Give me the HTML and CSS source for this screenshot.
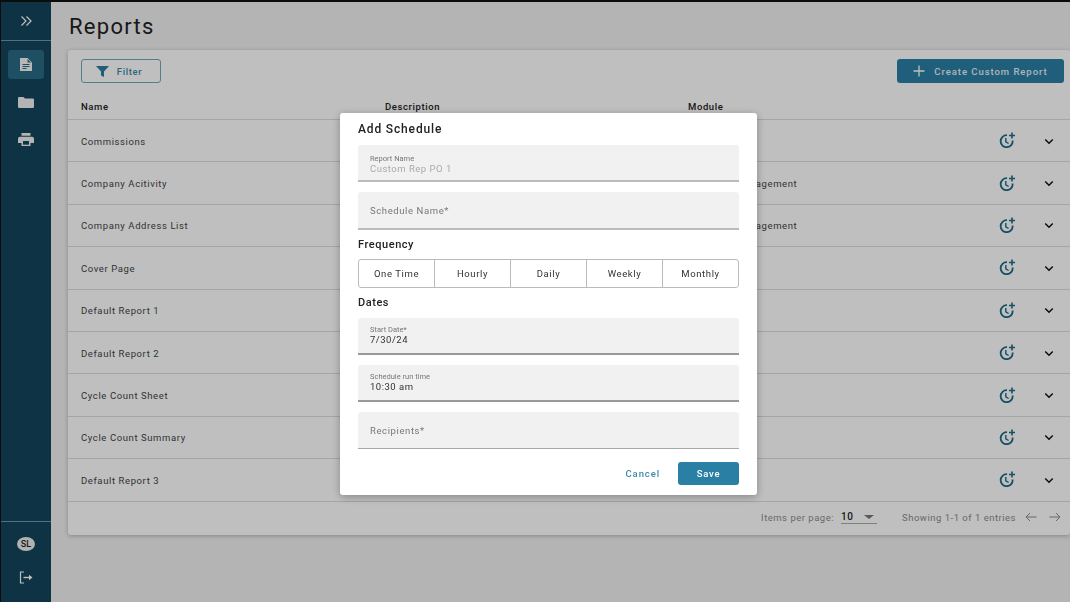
FILE: index.html
```html
<!DOCTYPE html>
<html lang="en">
<head>
  <meta charset="UTF-8">
  <title>Reports</title>
  <link rel="stylesheet" href="styles.css">
</head>
<body>
  <svg class="icon-defs" width="0" height="0">
    <symbol id="clock-plus" viewBox="0 0 20 16">
      <path d="M10 3.200A6 6 0 1 0 15.600 8.500" fill="none" stroke="currentColor" stroke-width="1.800"/>
      <path d="M8.800 6v3.800l2.800 1.700" fill="none" stroke="currentColor" stroke-width="1.400"/>
      <path d="M15 .5v6M12 3.500h6" fill="none" stroke="currentColor" stroke-width="1.600"/>
    </symbol>
    <symbol id="chevron" viewBox="0 0 12 8">
      <path d="M1.500 1.500 6 6l4.500-4.500" fill="none" stroke="currentColor" stroke-width="1.800"/>
    </symbol>
  </svg>

  <div class="app">
    <nav class="sidebar">
      <div class="sidebar-top">
        <svg width="12" height="12" viewBox="0 0 12 12"><path d="M1.500 1.500 6 6l-4.500 4.500M6.500 1.500 11 6l-4.500 4.500" fill="none" stroke="#fff" stroke-width="1.200"/></svg>
      </div>
      <div class="nav-items">
        <a class="nav-item active">
          <svg width="12" height="13" viewBox="0 0 12 13"><path fill="#f4f4f4" d="M0 0h7.500L12 4.500V13H0z"/><path fill="none" stroke="#2a6a84" stroke-width="1.100" d="M2.500 6.500h7M2.500 8.500h7M2.500 10.500h4"/><path fill="#2a6a84" d="M7.500 1v3.500H11z"/></svg>
        </a>
        <a class="nav-item">
          <svg width="16" height="11" viewBox="0 0 16 11"><path fill="#f0f0f0" d="M0 1.200A1.200 1.200 0 0 1 1.200 0h4.300l1.500 1.500h7.800A1.200 1.200 0 0 1 16 2.700v7.100a1.200 1.200 0 0 1-1.200 1.200H1.200A1.200 1.200 0 0 1 0 9.800z"/></svg>
        </a>
        <a class="nav-item">
          <svg width="16" height="13" viewBox="0 0 16 13"><path fill="#f0f0f0" d="M3.500 0h9v2.800h-9zM2 3.800h12a2 2 0 0 1 2 2V10h-3.500v3h-9v-3H0V5.800a2 2 0 0 1 2-2z"/><path fill="#13455d" d="M5 8h6v3.700H5z"/></svg>
        </a>
      </div>
      <div class="sidebar-bottom">
        <span class="avatar">SL</span>
        <svg width="14" height="13" viewBox="0 0 14 13"><path d="M5 1H1.500v11H5" fill="none" stroke="#fff" stroke-width="1.200"/><path d="M4.500 6.500H11" stroke="#fff" stroke-width="1.400"/><path fill="#fff" d="M10 3.800 13.500 6.500 10 9.200z"/></svg>
      </div>
    </nav>

    <main class="content">
      <h1>Reports</h1>
      <section class="card">
        <div class="toolbar">
          <button class="btn-filter">
            <svg width="13" height="11" viewBox="0 0 13 11"><path fill="#2a7fa5" d="M0 0h13L8 5.500V11L5 9.500v-4z"/></svg>
            Filter
          </button>
          <button class="btn-create">
            <svg width="12" height="12" viewBox="0 0 12 12"><path d="M6 .5v11M.5 6h11" stroke="#fff" stroke-width="1.300"/></svg>
            Create Custom Report
          </button>
        </div>
        <div class="row head">
          <span>Name</span><span>Description</span><span>Module</span>
        </div>
        <div class="row">
          <span>Commissions</span><span></span><span></span>
          <svg class="clock"><use href="#clock-plus"/></svg><svg class="chev"><use href="#chevron"/></svg>
        </div>
        <div class="row">
          <span>Company Acitivity</span><span></span><span>Company Management</span>
          <svg class="clock"><use href="#clock-plus"/></svg><svg class="chev"><use href="#chevron"/></svg>
        </div>
        <div class="row">
          <span>Company Address List</span><span></span><span>Company Management</span>
          <svg class="clock"><use href="#clock-plus"/></svg><svg class="chev"><use href="#chevron"/></svg>
        </div>
        <div class="row">
          <span>Cover Page</span><span></span><span></span>
          <svg class="clock"><use href="#clock-plus"/></svg><svg class="chev"><use href="#chevron"/></svg>
        </div>
        <div class="row">
          <span>Default Report 1</span><span></span><span></span>
          <svg class="clock"><use href="#clock-plus"/></svg><svg class="chev"><use href="#chevron"/></svg>
        </div>
        <div class="row">
          <span>Default Report 2</span><span></span><span>Vendor Order</span>
          <svg class="clock"><use href="#clock-plus"/></svg><svg class="chev"><use href="#chevron"/></svg>
        </div>
        <div class="row">
          <span>Cycle Count Sheet</span><span></span><span></span>
          <svg class="clock"><use href="#clock-plus"/></svg><svg class="chev"><use href="#chevron"/></svg>
        </div>
        <div class="row">
          <span>Cycle Count Summary</span><span></span><span></span>
          <svg class="clock"><use href="#clock-plus"/></svg><svg class="chev"><use href="#chevron"/></svg>
        </div>
        <div class="row">
          <span>Default Report 3</span><span></span><span></span>
          <svg class="clock"><use href="#clock-plus"/></svg><svg class="chev"><use href="#chevron"/></svg>
        </div>
        <div class="pager">
          <span>Items per page:</span>
          <span class="page-size"><b>10</b><i class="caret"></i></span>
          <span class="showing">Showing 1-1 of 1 entries</span>
          <svg width="12" height="10" viewBox="0 0 12 10"><path d="M11.500 5H1M5 1 1 5l4 4" fill="none" stroke="#8a8a8a" stroke-width="1"/></svg>
          <svg width="12" height="10" viewBox="0 0 12 10"><path d="M.5 5H11M7 1l4 4-4 4" fill="none" stroke="#8a8a8a" stroke-width="1"/></svg>
        </div>
      </section>
    </main>
  </div>

  <!-- Add Schedule modal -->
  <div class="modal-container">
    <div class="modal-content">
      <h2>Add Schedule</h2>
      <div class="field filled disabled">
        <label>Report Name</label>
        <div class="value">Custom Rep PO 1</div>
      </div>
      <div class="field schedule-name">
        <div class="placeholder">Schedule Name*</div>
      </div>
      <h3 class="freq-title">Frequency</h3>
      <div class="toggle-group">
        <button>One Time</button>
        <button>Hourly</button>
        <button>Daily</button>
        <button>Weekly</button>
        <button>Monthly</button>
      </div>
      <h3 class="dates-title">Dates</h3>
      <div class="field filled">
        <label>Start Date*</label>
        <div class="value">7/30/24</div>
      </div>
      <div class="field filled">
        <label>Schedule run time</label>
        <div class="value">10:30 am</div>
      </div>
      <div class="field thin">
        <div class="placeholder">Recipients*</div>
      </div>
      <div class="modal-buttons">
        <button class="btn-cancel">Cancel</button>
        <button class="btn-save">Save</button>
      </div>
    </div>
  </div>
</body>
</html>
```

FILE: styles.css
```css
* {
  box-sizing: border-box;
}

body {
  margin: 0;
  height: 602px;
  overflow: hidden;
  font-family: Roboto, "Liberation Sans", sans-serif;
  background-color: #f0f0f0;
  color: #333;
  border-top: 2px solid #111;
  border-left: 1px solid #111;
}

button {
  font-family: inherit;
  cursor: pointer;
}

.icon-defs {
  position: absolute;
}

.app {
  display: flex;
  height: 600px;
}

/* Sidebar */
.sidebar {
  width: 50px;
  flex-shrink: 0;
  display: flex;
  flex-direction: column;
  background-color: #13455d;
}

.sidebar-top {
  height: 39px;
  display: flex;
  align-items: center;
  justify-content: center;
  border-bottom: 1px solid #6f97a6;
}

.nav-items {
  flex: 1;
  display: flex;
  flex-direction: column;
  align-items: center;
  gap: 10px;
  padding-top: 9px;
}

.nav-item {
  width: 36px;
  height: 27px;
  display: flex;
  align-items: center;
  justify-content: center;
  border-radius: 3px;
}

.nav-item.active {
  height: 29px;
  background-color: #2a6a84;
}

.sidebar-bottom {
  height: 81px;
  display: flex;
  flex-direction: column;
  align-items: center;
  gap: 20px;
  padding-top: 15px;
  border-top: 1px solid #6f97a6;
}

.avatar {
  width: 18px;
  height: 14px;
  border-radius: 50%;
  display: flex;
  align-items: center;
  justify-content: center;
  font-size: 9px;
  font-weight: 500;
  color: #222;
  background-color: #eee;
}

/* Main content */
.content {
  flex: 1;
  min-width: 0;
  padding: 0 0 0 17px;
}

h1 {
  margin: 0;
  height: 48px;
  padding: 12px 0 0 1px;
  font-size: 22px;
  line-height: 26px;
  font-weight: 400;
  letter-spacing: 1.300px;
  color: #222;
}

.card {
  background-color: #fff;
  border-radius: 3px;
  box-shadow: 0 1px 4px rgba(0, 0, 0, 0.25);
}

.toolbar {
  height: 44px;
  display: flex;
  align-items: center;
  justify-content: space-between;
  padding: 0 6px 2px 13px;
}

.btn-filter {
  width: 80px;
  height: 24px;
  display: flex;
  align-items: center;
  justify-content: center;
  gap: 8px;
  padding: 0 4px 0 0;
  font-size: 9.500px;
  font-weight: 500;
  letter-spacing: .6px;
  color: #3a8aab;
  background-color: #fff;
  border: 1.500px solid #6fa6bd;
  border-radius: 3px;
}

.btn-create {
  width: 167px;
  height: 24px;
  display: flex;
  align-items: center;
  justify-content: center;
  gap: 9px;
  font-size: 9.500px;
  font-weight: 500;
  letter-spacing: .95px;
  color: #e8f0f4;
  background-color: #2a7fa5;
  border: none;
  border-radius: 3px;
}

.row {
  height: 42.400px;
  display: grid;
  grid-template-columns: 304px 303px 1fr 20px 20px;
  align-items: center;
  padding: 1px 11px 0 13px;
  font-size: 9.500px;
  letter-spacing: .6px;
  color: #444;
  border-bottom: 1px solid #ddd;
}

.row.head {
  height: 26px;
  padding-top: 0;
  font-weight: 500;
  color: #222;
}

.clock {
  width: 20px;
  height: 16px;
  color: #1f6a8a;
  margin: -2px 0 0 -22px;
}

.chev {
  width: 10px;
  height: 7px;
  color: #111;
  margin-left: 5px;
}

.pager {
  height: 33px;
  display: flex;
  align-items: center;
  justify-content: flex-end;
  padding: 0 9px 2px 0;
  font-size: 9.500px;
  letter-spacing: .5px;
  color: #8c8c8c;
}

.page-size {
  width: 36px;
  height: 13px;
  margin: 0 25px 0 7px;
  display: flex;
  align-items: center;
  justify-content: space-between;
  border-bottom: 1px solid #aaa;
}

.page-size b {
  font-weight: 500;
  font-size: 10px;
  color: #222;
}

.caret {
  margin-right: 3px;
  border-left: 5px solid transparent;
  border-right: 5px solid transparent;
  border-top: 4px solid #777;
}

.showing {
  margin-right: 9px;
}

.pager svg + svg {
  margin-left: 12px;
}

/* Modal */
.modal-container {
  position: fixed;
  top: 0;
  left: 0;
  width: 100%;
  height: 100%;
  background-color: rgba(0, 0, 0, 0.25);
  display: flex;
  justify-content: center;
  align-items: flex-start;
}

.modal-content {
  width: 417px;
  height: 382px;
  margin: 113px 0 0 27px;
  padding: 10px 18px 0;
  background-color: #fff;
  border-radius: 3px;
  box-shadow: 0 2px 8px rgba(0, 0, 0, 0.3);
}

h2 {
  margin: 0 0 10px;
  font-size: 12px;
  line-height: 12px;
  font-weight: 500;
  letter-spacing: .85px;
  color: #222;
}

h3 {
  margin: 0;
  font-size: 11px;
  line-height: 12px;
  font-weight: 500;
  letter-spacing: .55px;
  color: #222;
}

.freq-title {
  margin: 9px 0 8px;
}

.dates-title {
  margin: 9px 0;
}

.field {
  height: 37px;
  margin-bottom: 10px;
  padding: 0 12px;
  display: flex;
  flex-direction: column;
  justify-content: center;
  background-color: #f1f1f1;
  border-radius: 3px 3px 0 0;
  border-bottom: 2px solid #999;
}

.field.disabled,
.field.schedule-name {
  border-bottom-color: #bbb;
}

.field.disabled {
  padding-top: 3px;
}

.field.schedule-name {
  height: 38px;
  margin-bottom: 9px;
}

.field.thin {
  border-bottom: 1px solid #aaa;
}

.field label {
  font-size: 7.500px;
  line-height: 9px;
  color: #777;
}

.field .value {
  font-size: 9.500px;
  line-height: 12px;
  letter-spacing: .5px;
  color: #333;
}

.field.disabled .value {
  color: #aaa;
}

.placeholder {
  font-size: 9.500px;
  letter-spacing: .6px;
  color: #777;
}

.toggle-group {
  height: 29px;
  display: flex;
  border: 1px solid #bbb;
  border-radius: 3px;
}

.toggle-group button {
  flex: 1;
  padding: 0;
  font-size: 9.500px;
  letter-spacing: .6px;
  color: #333;
  background: none;
  border: none;
  border-left: 1px solid #bbb;
}

.toggle-group button:first-child {
  border-left: none;
}

.modal-buttons {
  display: flex;
  justify-content: flex-end;
  align-items: center;
  gap: 18px;
  margin-top: 13px;
}

.btn-cancel {
  padding: 0;
  font-size: 9.500px;
  font-weight: 500;
  letter-spacing: .9px;
  color: #3a8aab;
  background: none;
  border: none;
}

.btn-save {
  width: 61px;
  height: 23px;
  font-size: 9.500px;
  font-weight: 500;
  letter-spacing: .8px;
  color: #fff;
  background-color: #2a7fa5;
  border: none;
  border-radius: 3px;
}
```
